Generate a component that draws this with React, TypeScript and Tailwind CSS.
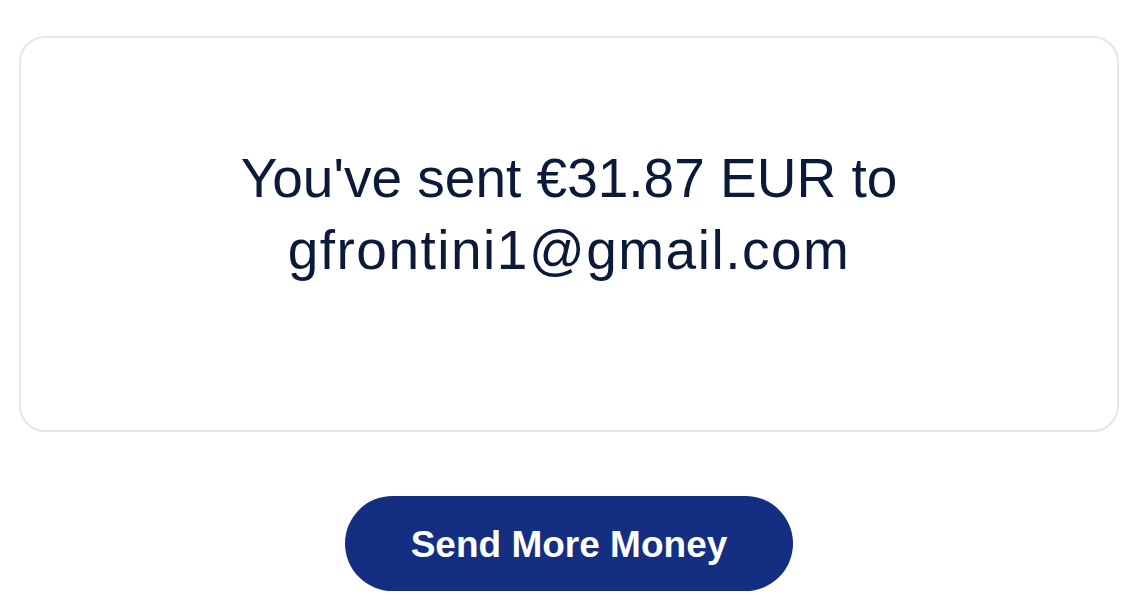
export default function App() {
  return (
    <div className="w-[1148px] h-[604px] bg-white overflow-hidden" style={{ fontFamily: '"Liberation Sans", Arial, sans-serif' }}>
      <div className="w-[1138px]">
        <div className="pt-[36px] px-[19px]">
          <div className="h-[396px] border-2 border-[#e6e6e6] rounded-[26px] flex items-start justify-center pt-[104px]">
            <p className="text-center text-[55px] leading-[72px] text-[#0b1a38]">
              <span className="block">You've sent €31.87 EUR to</span>
              <span className="block tracking-[1.5px]">gfrontini1@gmail.com</span>
            </p>
          </div>
        </div>
        <div className="flex justify-center pt-[64px]">
          <button className="w-[448px] h-[95px] rounded-full bg-[#142f82] text-white font-bold text-[37px] pt-[3px]">
            Send More Money
          </button>
        </div>
      </div>
    </div>
  );
}
